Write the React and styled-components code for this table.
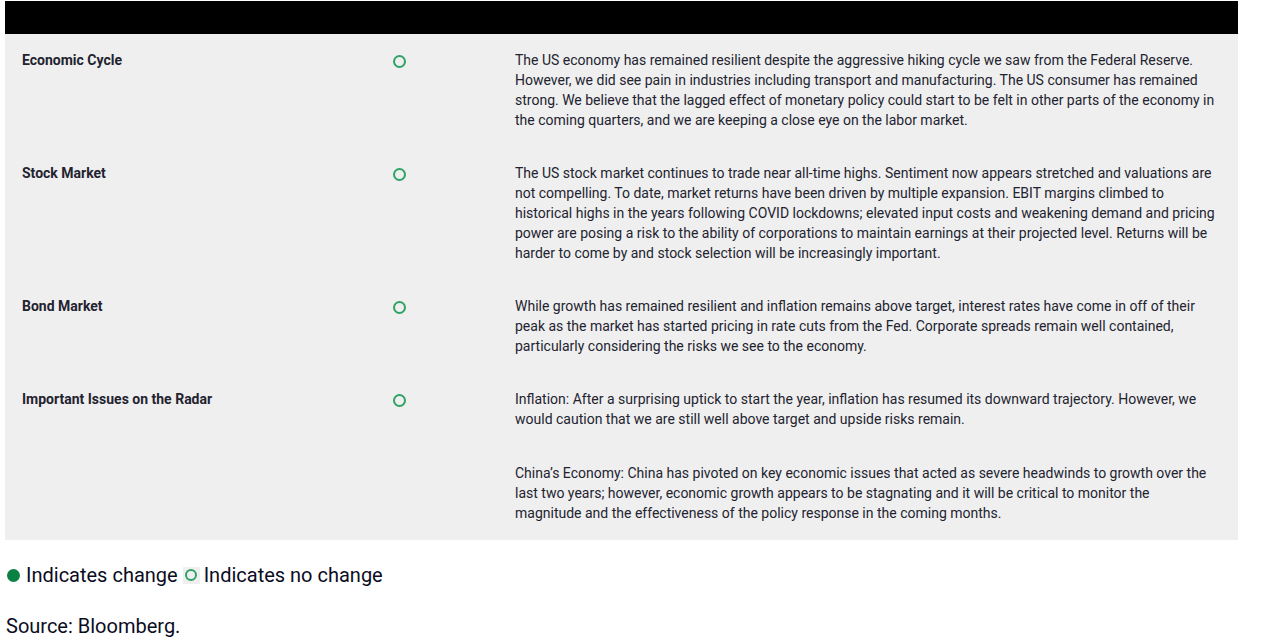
import styled, { createGlobalStyle } from "styled-components";

const GlobalStyle = createGlobalStyle`
  body {
    margin: 0;
    background: #fff;
    font-family: Roboto, "Liberation Sans", sans-serif;
  }
`;

const Page = styled.div`
  padding: 1px 0 0 5px;
  width: 1233px;
`;

const Table = styled.table`
  width: 1233px;
  border-collapse: collapse;
  table-layout: fixed;
  font-size: 14px;
  line-height: 20px;
  color: #23232f;
`;

const HeadRow = styled.tr`
  background: #000;
  height: 33px;
`;

const HeadCell = styled.th`
  padding: 0;
  width: ${(p) => (p.$w ? `${p.$w}px` : "auto")};
`;

const Row = styled.tr`
  background: #efefef;
`;

const Cell = styled.td`
  vertical-align: top;
  padding: 16px ${(p) => (p.$wide ? 20 : 17)}px 17px 17px;
`;

const Label = styled.strong`
  font-weight: 700;
`;

const Ring = styled.span`
  display: inline-block;
  box-sizing: border-box;
  width: ${(p) => p.$size || 13}px;
  height: ${(p) => p.$size || 13}px;
  border: 2px solid #2fa265;
  border-radius: 50%;
  vertical-align: middle;
`;

const Para = styled.p`
  margin: 0;
  & + & {
    margin-top: 34px;
  }
`;

const Legend = styled.div`
  display: flex;
  align-items: center;
  margin-top: 23px;
  padding-left: 2px;
  font-size: 20px;
  line-height: 24px;
  color: #0b0c1e;
`;

const Dot = styled.span`
  width: 13px;
  height: 13px;
  border-radius: 50%;
  background: #0a8043;
  margin-right: 6px;
`;

const RingBox = styled.span`
  display: inline-flex;
  align-items: center;
  justify-content: center;
  width: 17px;
  height: 17px;
  margin: 0 4px 0 5px;
  background: #efefef;
`;

const Source = styled.p`
  margin: 27px 0 0 1px;
  font-size: 20px;
  line-height: 24px;
  color: #0b0c1e;
`;

const rows = [
  {
    label: "Economic Cycle",
    text: [
      "The US economy has remained resilient despite the aggressive hiking cycle we saw from the Federal Reserve. However, we did see pain in industries including transport and manufacturing. The US consumer has remained strong. We believe that the lagged effect of monetary policy could start to be felt in other parts of the economy in the coming quarters, and we are keeping a close eye on the labor market.",
    ],
  },
  {
    label: "Stock Market",
    text: [
      "The US stock market continues to trade near all-time highs. Sentiment now appears stretched and valuations are not compelling. To date, market returns have been driven by multiple expansion. EBIT margins climbed to historical highs in the years following COVID lockdowns; elevated input costs and weakening demand and pricing power are posing a risk to the ability of corporations to maintain earnings at their projected level. Returns will be harder to come by and stock selection will be increasingly important.",
    ],
  },
  {
    label: "Bond Market",
    text: [
      "While growth has remained resilient and inflation remains above target, interest rates have come in off of their peak as the market has started pricing in rate cuts from the Fed. Corporate spreads remain well contained, particularly considering the risks we see to the economy.",
    ],
  },
  {
    label: "Important Issues on the Radar",
    text: [
      "Inflation: After a surprising uptick to start the year, inflation has resumed its downward trajectory. However, we would caution that we are still well above target and upside risks remain.",
      "China’s Economy: China has pivoted on key economic issues that acted as severe headwinds to growth over the last two years; however, economic growth appears to be stagnating and it will be critical to monitor the magnitude and the effectiveness of the policy response in the coming months.",
    ],
  },
];

export default function App() {
  return (
    <Page>
      <GlobalStyle />
      <Table>
        <thead>
          <HeadRow>
            <HeadCell $w={371} />
            <HeadCell $w={122} />
            <HeadCell />
          </HeadRow>
        </thead>
        <tbody>
          {rows.map((r) => (
            <Row key={r.label}>
              <Cell>
                <Label>{r.label}</Label>
              </Cell>
              <Cell>
                <Ring />
              </Cell>
              <Cell $wide>
                {r.text.map((t, i) => (
                  <Para key={i}>{t}</Para>
                ))}
              </Cell>
            </Row>
          ))}
        </tbody>
      </Table>
      <Legend>
        <Dot />
        <span>Indicates change</span>
        <RingBox>
          <Ring $size={12} />
        </RingBox>
        <span>Indicates no change</span>
      </Legend>
      <Source>Source: Bloomberg.</Source>
    </Page>
  );
}
